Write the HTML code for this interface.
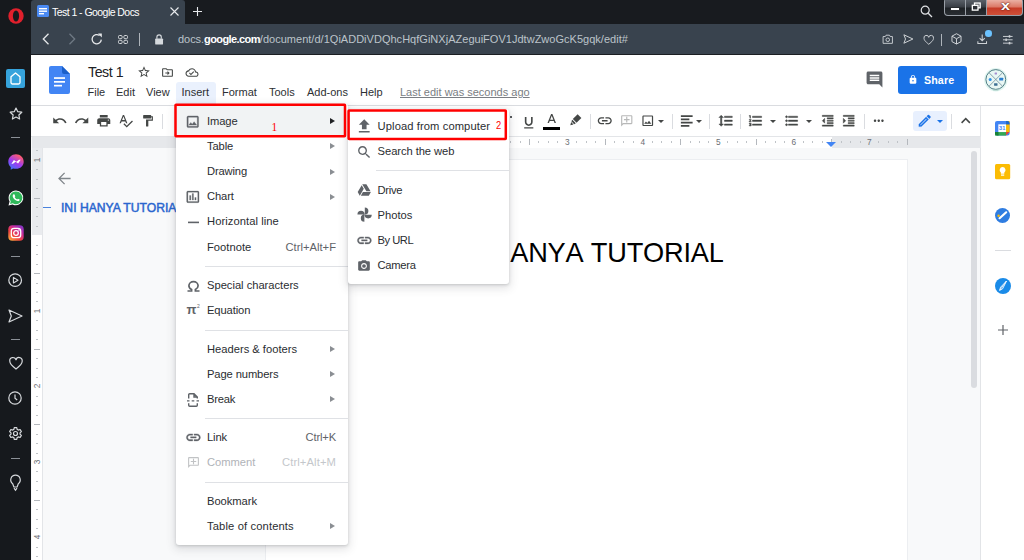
<!DOCTYPE html>
<html lang="en">
<head>
<meta charset="utf-8">
<title>Test 1 - Google Docs</title>
<style>
*{box-sizing:border-box;margin:0;padding:0}
html,body{width:1024px;height:560px;overflow:hidden}
body{position:relative;background:#f8f9fa;font-family:"Liberation Sans",sans-serif;color:#202124}
.abs{position:absolute}
svg{position:absolute;overflow:visible}
.t{position:absolute;white-space:nowrap;line-height:1}
/* opera chrome */
#osb{left:0;top:0;width:31px;height:560px;background:#16191d}
#tabbar{left:31px;top:0;width:993px;height:24px;background:#181b1f}
#tab{left:31px;top:0;width:154px;height:25px;background:#39434e;border-radius:3px 3px 0 0}
#addr{left:31px;top:24px;width:993px;height:30px;background:#39434e}
#addrline{left:31px;top:54px;width:993px;height:1px;background:#1b1e22}
/* docs */
#hdr{left:31px;top:55px;width:993px;height:50px;background:#fff}
#hdrline{left:31px;top:105px;width:993px;height:1px;background:#dadce0}
#tb{left:31px;top:106px;width:950px;height:30px;background:#fff}
#tbline{left:31px;top:136px;width:950px;height:1px;background:#e3e5e8}
#rpanel{left:981px;top:106px;width:43px;height:454px;background:#fff}
#rpline{left:980px;top:106px;width:1px;height:454px;background:#e2e4e7}
#page{left:265.500px;top:159.700px;width:641.800px;height:410px;background:#fff;box-shadow:0 0 0 1px #eceef1}
.sep{position:absolute;width:1px;height:15px;top:114px;background:#dadce0}
.menu{position:absolute;background:#fff;border-radius:3px;box-shadow:0 1px 3px rgba(60,64,67,.22),0 3px 8px 2px rgba(60,64,67,.13)}
.mi{position:absolute;font-size:11.200px;letter-spacing:.1px;line-height:13px;white-space:nowrap;color:#2a2d31}
.sc{position:absolute;font-size:11.200px;letter-spacing:.1px;line-height:13px;white-space:nowrap;color:#5f6368;text-align:right}
.msep{position:absolute;height:1px;background:#dfe1e5}
.arr{position:absolute;width:0;height:0;border-left:5px solid #5f6368;border-top:3px solid transparent;border-bottom:3px solid transparent}
.mb{font-size:11px;line-height:12px;color:#2c2f33}
.ti{width:13.5px;height:13.5px;top:114.2px;fill:#444746;transform:scale(1.16)}
.ti.ns{transform:none}
.ti.tk{stroke:#444746;stroke-width:.7}
.car{position:absolute;top:119.500px;width:0;height:0;border-top:3.500px solid #444746;border-left:3px solid transparent;border-right:3px solid transparent}
.rn{width:10px;text-align:center;font-size:8.300px;line-height:9px;color:#6a6e73}
.rn.v{height:10px;line-height:10px;transform:rotate(-90deg)}
.osd{left:11px;width:9px;height:1px;background:#8b9097}
.red{position:absolute;border:2.500px solid #f00;border-radius:1px}
</style>
</head>
<body>
<!-- ===== Opera chrome ===== -->
<div class="abs" id="tabbar"></div>
<div class="abs" id="tab"></div>
<div class="abs" id="addr"></div>
<div class="abs" id="addrline"></div>
<div class="abs" id="osb"></div>

<!-- ===== Docs surfaces ===== -->
<div class="abs" id="hdr"></div>
<div class="abs" id="hdrline"></div>
<div class="abs" id="tb"></div>
<div class="abs" id="tbline"></div>
<div class="abs" id="page"></div>
<div class="abs" id="rpanel"></div>
<div class="abs" id="rpline"></div>

<!--CHROME-->
<!-- tab -->
<svg style="left:37px;top:5px" width="12" height="12" viewBox="0 0 12 12"><rect x="0" y="0" width="12" height="12" rx="1.5" fill="#4a8af4"/><rect x="2" y="3" width="8" height="1.4" fill="#fff"/><rect x="2" y="5.5" width="8" height="1.4" fill="#fff"/><rect x="2" y="8" width="5" height="1.4" fill="#fff"/></svg>
<div class="t" id="tabtxt" style="left:52px;top:7px;font-size:10.5px;color:#fff;letter-spacing:-0.55px">Test 1 - Google Docs</div>
<svg style="left:170px;top:7px" width="9" height="9" viewBox="0 0 9 9"><path d="M0.5 0.5L8.5 8.5M8.5 0.5L0.5 8.5" stroke="#e8eaed" stroke-width="1.1" fill="none"/></svg>
<svg style="left:193px;top:7px" width="9" height="9" viewBox="0 0 9 9"><path d="M4.5 0V9M0 4.5H9" stroke="#e8eaed" stroke-width="1.1" fill="none"/></svg>
<!-- search + window buttons -->
<svg style="left:920px;top:5px" width="13" height="13" viewBox="0 0 13 13"><circle cx="5.200" cy="5.200" r="4" stroke="#e0e2e5" stroke-width="1.200" fill="none"/><path d="M8.200 8.200L12 12" stroke="#e0e2e5" stroke-width="1.300"/></svg>
<div class="abs" style="left:943.500px;top:-2px;width:79.500px;height:17.800px;border-radius:4px;background:#9aa0a8"></div>
<div class="abs" style="left:944.500px;top:0;width:20.500px;height:14.600px;border-radius:0 0 0 3px;background:linear-gradient(#5a6068,#3a3f46 45%,#1e2226 55%,#2a2e33)"></div>
<div class="abs" style="left:966.300px;top:0;width:19.700px;height:14.600px;background:linear-gradient(#5a6068,#3a3f46 45%,#1e2226 55%,#2a2e33)"></div>
<div class="abs" style="left:987.300px;top:0;width:34.700px;height:14.600px;border-radius:0 0 3px 0;background:linear-gradient(#eab0a4,#dc7a68 45%,#c63c28 55%,#cf5038)"></div>
<div class="abs" style="left:949.600px;top:7px;width:10px;height:4px;background:#fff;border:1px solid #2a2d31;box-sizing:border-box"></div>
<svg style="left:970.500px;top:2px" width="10.500" height="9.600" viewBox="0 0 12 11"><rect x="4" y="1.200" width="6.500" height="5.500" fill="#555a61" stroke="#fff" stroke-width="1.500"/><rect x="1.500" y="3.800" width="6.500" height="5.500" fill="#2c3036" stroke="#fff" stroke-width="1.500"/></svg>
<div class="t" style="left:1001px;top:-0.500px;font-size:12px;line-height:13px;font-weight:bold;color:#fff;text-shadow:0 0 1.500px #5a1a10,0 0 1px #5a1a10;transform:scaleX(1.350);transform-origin:0 0">x</div>
<!-- address bar icons -->
<svg style="left:42px;top:33px" width="8" height="12" viewBox="0 0 8 12"><path d="M6.5 0.8L1.3 6L6.5 11.2" stroke="#e6e8ea" stroke-width="1.3" fill="none"/></svg>
<svg style="left:68px;top:33px" width="8" height="12" viewBox="0 0 8 12"><path d="M1.5 0.8L6.7 6L1.5 11.2" stroke="#6f7984" stroke-width="1.3" fill="none"/></svg>
<svg style="left:91px;top:33px" width="12" height="12" viewBox="0 0 12 12"><path d="M10.3 6.6A4.6 4.6 0 1 1 8.6 2.6" stroke="#e6e8ea" stroke-width="1.3" fill="none"/><path d="M7 0.6H10.8V4.4Z" fill="#e6e8ea"/></svg>
<svg style="left:117.500px;top:34.800px" width="10" height="9" viewBox="0 0 10 9"><g fill="none" stroke="#d6d9dc" stroke-width="1"><rect x="0.500" y="0.500" width="3.600" height="3.200" rx="1"/><rect x="5.900" y="0.500" width="3.600" height="3.200" rx="1"/><rect x="0.500" y="5.300" width="3.600" height="3.200" rx="1"/><rect x="5.900" y="5.300" width="3.600" height="3.200" rx="1"/></g></svg>
<div class="abs" style="left:139px;top:33px;width:1px;height:13px;background:#aeb4ba"></div>
<svg style="left:154.500px;top:33.700px" width="8.200" height="10.500" viewBox="0 0 9 12"><rect x="0" y="5" width="9" height="7" rx="1" fill="#d5d9dd"/><path d="M2 5.500V3.500A2.500 2.500 0 0 1 7 3.500V5.500" stroke="#d5d9dd" stroke-width="1.300" fill="none"/></svg>
<div class="t" id="url" style="left:178px;top:34px;font-size:11px;color:#bcc3ca;letter-spacing:-0.04px">docs.<span style="color:#fff;font-weight:bold;letter-spacing:-0.6px">google.com</span><span id="urlrest" style="letter-spacing:.02px">/document/d/1QiADDiVDQhcHqfGiNXjAZeguiFOV1JdtwZwoGcK5gqk/edit#</span></div>
<!-- right addr icons -->
<svg style="left:881.500px;top:33.800px" width="11.500" height="10.200" viewBox="0 0 13 12"><path d="M1 3H3.600L4.500 1.400H8.500L9.400 3H12V11H1Z" stroke="#cdd1d5" stroke-width="1.100" fill="none" stroke-linejoin="round"/><circle cx="6.500" cy="6.800" r="2.100" stroke="#cdd1d5" stroke-width="1.100" fill="none"/></svg>
<svg style="left:903px;top:34px" width="10.800" height="10" viewBox="0 0 12 11"><path d="M1 0.800L11 5.500L1 10.200L2.800 5.500Z" stroke="#cdd1d5" stroke-width="1.100" fill="none" stroke-linejoin="round"/></svg>
<svg style="left:922.500px;top:34.500px" width="11.500" height="10" viewBox="0 0 12 11"><path d="M6 10.200C2 7 0.800 5.400 0.800 3.500A2.600 2.600 0 0 1 6 2.600A2.600 2.600 0 0 1 11.200 3.500C11.200 5.400 10 7 6 10.200Z" stroke="#cdd1d5" stroke-width="1.100" fill="none"/></svg>
<div class="abs" style="left:940.500px;top:33.500px;width:1px;height:12px;background:#aeb4ba"></div>
<svg style="left:951.200px;top:33.300px" width="11" height="11.800" viewBox="0 0 12 13"><path d="M6 0.800L11 3.500V9.500L6 12.200L1 9.500V3.500Z M1 3.500L6 6.300L11 3.500 M6 6.300V12.200" stroke="#cdd1d5" stroke-width="1.100" fill="none" stroke-linejoin="round"/></svg>
<svg style="left:976.800px;top:34px" width="10.400" height="10.400" viewBox="0 0 12 12"><path d="M6 0.500V7.500M3 4.800L6 7.800L9 4.800M1 8.500V11H11V8.500" stroke="#cdd1d5" stroke-width="1.200" fill="none"/></svg>
<div class="abs" style="left:985.200px;top:30px;width:6.600px;height:6.600px;border-radius:50%;background:#6cc3ff"></div>
<svg style="left:1002.700px;top:34.500px" width="9.600" height="9.600" viewBox="0 0 10 10"><path d="M0 1.500H10M0 5H10M0 8.500H10" stroke="#cdd1d5" stroke-width="1"/><rect x="6" y="0.200" width="1.600" height="2.600" fill="#cdd1d5"/><rect x="2.500" y="3.700" width="1.600" height="2.600" fill="#cdd1d5"/><rect x="6" y="7.200" width="1.600" height="2.600" fill="#cdd1d5"/></svg>
<!--/CHROME-->
<!--HEADER-->
<!-- docs logo -->
<svg style="left:49px;top:66px" width="21" height="28" viewBox="0 0 21 28"><path d="M2 0H13L21 8V26A2 2 0 0 1 19 28H2A2 2 0 0 1 0 26V2A2 2 0 0 1 2 0Z" fill="#4285f4"/><path d="M13 0L21 8H15A2 2 0 0 1 13 6Z" fill="#1a5fc9"/><rect x="5" y="11.2" width="11" height="1.7" fill="#fff"/><rect x="5" y="15" width="11" height="1.7" fill="#fff"/><rect x="5" y="18.8" width="8" height="1.7" fill="#fff"/></svg>
<div class="t" id="title" style="left:88px;top:63.500px;font-size:14.200px;line-height:17px;color:#202124;letter-spacing:-0.45px">Test 1</div>
<svg style="left:137px;top:65px" width="14" height="14" viewBox="0 0 24 24"><path fill="#444746" d="M22 9.24l-7.19-.62L12 2 9.19 8.63 2 9.24l5.46 4.73L5.82 21 12 17.27 18.18 21l-1.63-7.03L22 9.24zM12 15.4l-3.76 2.27 1-4.28-3.32-2.88 4.38-.38L12 6.1l1.71 4.04 4.38.38-3.32 2.88 1 4.28L12 15.4z"/></svg>
<svg style="left:161px;top:66px" width="13" height="13" viewBox="0 0 24 24"><path fill="#444746" d="M20 6h-8l-2-2H4c-1.1 0-2 .9-2 2v12c0 1.1.9 2 2 2h16c1.1 0 2-.9 2-2V8c0-1.1-.9-2-2-2zm0 12H4V6h5.17l2 2H20v10zm-8-1l4-4-4-4v3H8v2h4v3z"/></svg>
<svg style="left:185px;top:66px" width="14" height="13" viewBox="0 0 24 24"><path fill="#444746" d="M19.35 10.04C18.67 6.59 15.64 4 12 4 9.11 4 6.6 5.64 5.35 8.04 2.34 8.36 0 10.91 0 14c0 3.31 2.69 6 6 6h13c2.76 0 5-2.24 5-5 0-2.64-2.05-4.78-4.65-4.96zM19 18H6c-2.21 0-4-1.79-4-4s1.79-4 4-4h.71C7.37 7.69 9.48 6 12 6c3.04 0 5.5 2.46 5.5 5.5v.5H19c1.66 0 3 1.34 3 3s-1.34 3-3 3zm-9-3.820l-2.090-2.090L6.5 13.5 10 17l6.010-6.010-1.410-1.410z"/></svg>
<!-- menubar -->
<div class="abs" style="left:176px;top:82px;width:40px;height:23px;background:#eaf1fd;border-radius:3px 3px 0 0"></div>
<div class="t mb" id="m1" style="left:87.5px;top:86.400px">File</div>
<div class="t mb" id="m2" style="left:116px;top:86.400px">Edit</div>
<div class="t mb" id="m3" style="left:146px;top:86.400px">View</div>
<div class="t mb" id="m4" style="left:181.5px;top:86.400px">Insert</div>
<div class="t mb" id="m5" style="left:222px;top:86.400px">Format</div>
<div class="t mb" id="m6" style="left:269px;top:86.400px">Tools</div>
<div class="t mb" id="m7" style="left:307px;top:86.400px">Add-ons</div>
<div class="t mb" id="m8" style="left:360px;top:86.400px">Help</div>
<div class="t" id="lastedit" style="left:400px;top:86px;font-size:11px;color:#7a7e83;text-decoration:underline;line-height:12px">Last edit was seconds ago</div>
<!-- right of header -->
<svg style="left:864.500px;top:70px" width="19" height="19" viewBox="0 0 24 24"><path fill="#5f6368" d="M21.99 4c0-1.1-.89-2-1.99-2H4c-1.1 0-2 .9-2 2v12c0 1.1.9 2 2 2h14l4 4-.01-18zM18 14H6v-2h12v2zm0-3H6V9h12v2zm0-3H6V6h12v2z"/></svg>
<div class="abs" style="left:898.300px;top:66px;width:69.200px;height:28px;background:#1a73e8;border-radius:3px"></div>
<svg style="left:908px;top:74px" width="10" height="11" viewBox="0 0 24 24"><path fill="#fff" d="M18 8h-1V6c0-2.760-2.240-5-5-5S7 3.240 7 6v2H6c-1.100 0-2 .9-2 2v10c0 1.100.9 2 2 2h12c1.100 0 2-.9 2-2V10c0-1.100-.9-2-2-2zm-6 9c-1.100 0-2-.9-2-2s.9-2 2-2 2 .9 2 2-.9 2-2 2zm3.100-9H8.900V6c0-1.710 1.390-3.100 3.100-3.100 1.710 0 3.100 1.390 3.100 3.100v2z"/></svg>
<div class="t" id="share" style="left:924px;top:74px;font-size:10.700px;line-height:12px;font-weight:bold;letter-spacing:.1px;color:#fff">Share</div>
<!-- avatar -->
<svg style="left:983.500px;top:68px" width="23.600" height="23.600" viewBox="-11.800 -11.800 23.600 23.600"><circle r="11.700" fill="#e1f5f0"/><circle r="9.900" cy="-0.300" fill="#e9f7f4" stroke="#3f6f78" stroke-width=".9"/><path d="M-6.800 -7.100L6.800 6.500M6.800 -7.100L-6.800 6.500" stroke="#6f8c98" stroke-width=".8"/><circle cx="-5.600" cy="-0.200" r="1.500" fill="#2f8fe6"/><rect x="3.400" y="-2" width="4" height="2.800" rx=".4" fill="#2a7fd0"/><rect x="-1.700" y="3.500" width="3.400" height="2.400" rx=".3" fill="#3d6f92"/><rect x="-1.200" y="-7.300" width="2.400" height="2" rx=".4" fill="#a58fd0"/><rect x="-2.600" y="9.800" width="5.200" height=".9" fill="#9cc5bd"/></svg>
<!--/HEADER-->
<!--TOOLBAR-->
<!-- toolbar icons: each 13.5px (18*0.75) -->
<svg class="ti" style="left:53px" viewBox="0 0 24 24"><path d="M12.5 8c-2.650 0-5.050.99-6.900 2.600L2 7v9h9l-3.620-3.620c1.390-1.160 3.160-1.880 5.120-1.880 3.540 0 6.550 2.310 7.600 5.500l2.370-.78C21.080 11.030 17.150 8 12.500 8z"/></svg>
<svg class="ti" style="left:75px" viewBox="0 0 24 24"><path d="M18.400 10.600C16.550 8.990 14.150 8 11.500 8c-4.650 0-8.580 3.030-9.960 7.220L3.900 16c1.050-3.190 4.050-5.500 7.600-5.500 1.950 0 3.730.72 5.120 1.880L13 16h9V7l-3.600 3.600z"/></svg>
<svg class="ti" style="left:97px" viewBox="0 0 24 24"><path d="M19 8H5c-1.660 0-3 1.340-3 3v6h4v4h12v-4h4v-6c0-1.660-1.340-3-3-3zm-3 11H8v-5h8v5zm3-7c-.55 0-1-.45-1-1s.45-1 1-1 1 .45 1 1-.45 1-1 1zm-1-9H6v4h12V3z"/></svg>
<svg class="ti" style="left:119px" viewBox="0 0 24 24"><path d="M12.450 16h2.090L9.430 3H7.570L2.460 16h2.090l1.120-3h5.640l1.140 3zm-6.020-5L8.500 5.480 10.570 11H6.430zm15.160.59l-8.090 8.090L9.830 16l-1.410 1.410 5.090 5.090L23 13l-1.410-1.410z"/></svg>
<svg class="ti" style="left:141px;transform:scale(1.020)" viewBox="0 0 24 24"><path d="M18 4V3c0-.55-.45-1-1-1H5c-.55 0-1 .45-1 1v4c0 .55.45 1 1 1h12c.55 0 1-.45 1-1V6h1v4H9v11c0 .55.45 1 1 1h2c.55 0 1-.45 1-1v-9h8V4h-3z"/></svg>
<div class="sep" style="left:162px"></div>
<!-- after submenu -->
<svg class="ti" style="left:521.500px;top:115.500px" viewBox="0 0 24 24"><path d="M12 17c3.310 0 6-2.690 6-6V3h-2.500v8c0 1.930-1.570 3.500-3.500 3.500S8.500 12.930 8.500 11V3H6v8c0 3.310 2.690 6 6 6zm-7 2v2h14v-2H5z" /></svg>
<svg class="ti" style="left:544.500px" viewBox="0 0 24 24"><path d="M11 3L5.500 17h2.250l1.120-3h6.250l1.120 3h2.250L13 3h-2zm-1.380 9L12 5.670 14.380 12H9.620z" transform="translate(0 -1.500)"/></svg>
<div class="abs" style="left:542.500px;top:127px;width:17px;height:2.500px;background:#000"></div>
<svg class="ti" style="left:568.500px;top:113px;transform:scale(.95)" viewBox="0 0 24 24"><path d="M15.500 1.500L22.500 8.500L13.500 17.500L6.500 10.500Z"/><path d="M5.600 11.800L12.200 18.400L9 20.200L3.800 15Z"/><path d="M3.300 16.300L7.700 20.700L1.800 22.200Z"/></svg>
<div class="sep" style="left:590px"></div>
<svg class="ti" style="left:598px;transform:scale(1.250)" viewBox="0 0 24 24"><path d="M3.900 12c0-1.710 1.390-3.100 3.100-3.100h4V7H7c-2.760 0-5 2.240-5 5s2.240 5 5 5h4v-1.900H7c-1.710 0-3.100-1.390-3.100-3.100zM8 13h8v-2H8v2zm9-6h-4v1.900h4c1.710 0 3.100 1.390 3.100 3.100s-1.390 3.100-3.100 3.100h-4V17h4c2.760 0 5-2.240 5-5s-2.240-5-5-5z"/></svg>
<svg class="ti ns" style="left:620px;opacity:.38" viewBox="0 0 24 24"><path transform="translate(24 0) scale(-1 1)" d="M22 4c0-1.100-.9-2-2-2H4c-1.100 0-2 .9-2 2v12c0 1.100.9 2 2 2h14l4 4V4zm-2 13.170L18.830 16H4V4h16v13.170zM13 5h-2v4H7v2h4v4h2v-4h4V9h-4z"/></svg>
<svg class="ti ns" style="left:640.500px;transform:scale(1.060)" viewBox="0 0 24 24"><path d="M19 5v14H5V5h14m0-2H5c-1.100 0-2 .9-2 2v14c0 1.100.9 2 2 2h14c1.100 0 2-.9 2-2V5c0-1.100-.9-2-2-2zm-4.860 8.860l-3 3.870L9 13.140 6 17h12l-3.860-5.140z"/></svg>
<div class="car" style="left:658px"></div>
<div class="sep" style="left:671.500px"></div>
<svg class="ti" style="left:680px" viewBox="0 0 24 24"><path d="M3 3.500h18v2.600H3zM3 8.500h13v2.600H3zM3 13.500h18v2.600H3zM3 18.500h13v2.600H3z"/></svg>
<div class="car" style="left:696px"></div>
<div class="sep" style="left:709px"></div>
<svg class="ti tk" style="left:718.500px" viewBox="0 0 24 24"><path d="M6 7h2.500L5 3.500 1.500 7H4v10H1.500L5 20.500 8.500 17H6V7zm4-2v2h12V5H10zm0 14h12v-2H10v2zm0-6h12v-2H10v2z"/></svg>
<div class="sep" style="left:739.500px"></div>
<svg class="ti tk" style="left:749px" viewBox="0 0 24 24"><path d="M2 17h2v.5H3v1h1v.5H2v1h3v-4H2v1zm1-9h1V4H2v1h1v3zm-1 3h1.800L2 13.100v.9h3v-1H3.200L5 10.900V10H2v1zm5-6v2h14V5H7zm0 14h14v-2H7v2zm0-6h14v-2H7v2z"/></svg>
<div class="car" style="left:769.500px"></div>
<svg class="ti tk" style="left:785px" viewBox="0 0 24 24"><path d="M4 10.500c-.83 0-1.500.67-1.500 1.500s.67 1.500 1.500 1.500 1.500-.67 1.500-1.500-.67-1.500-1.500-1.500zm0-6c-.83 0-1.500.67-1.500 1.500S3.170 7.500 4 7.500 5.500 6.830 5.500 6 4.830 4.500 4 4.500zm0 12c-.83 0-1.500.68-1.500 1.500s.68 1.500 1.500 1.500 1.500-.68 1.500-1.500-.67-1.500-1.500-1.500zM7 19h14v-2H7v2zm0-6h14v-2H7v2zm0-8v2h14V5H7z"/></svg>
<div class="car" style="left:805.500px"></div>
<svg class="ti tk" style="left:820.500px;transform:scale(1.080)" viewBox="0 0 24 24"><path d="M11 17h10v-2H11v2zm-8-5l4 4V8l-4 4zm0 9h18v-2H3v2zM3 3v2h18V3H3zm8 6h10V7H11v2zm0 4h10v-2H11v2z"/></svg>
<svg class="ti tk" style="left:842px;transform:scale(1.080)" viewBox="0 0 24 24"><path d="M3 21h18v-2H3v2zM3 8v8l4-4-4-4zm8 9h10v-2H11v2zM3 3v2h18V3H3zm8 6h10V7H11v2zm0 4h10v-2H11v2z"/></svg>
<div class="sep" style="left:863.500px"></div>
<svg class="ti" style="left:871.500px" viewBox="0 0 24 24"><path d="M6 10c-1.100 0-2 .9-2 2s.9 2 2 2 2-.9 2-2-.9-2-2-2zm12 0c-1.100 0-2 .9-2 2s.9 2 2 2 2-.9 2-2-.9-2-2-2zm-6 0c-1.100 0-2 .9-2 2s.9 2 2 2 2-.9 2-2-.9-2-2-2z" transform="translate(0.600 0.600) scale(.95)"/></svg>
<!-- editing mode button -->
<div class="abs" style="left:913px;top:110.700px;width:33.800px;height:20.500px;background:#e8f0fe;border-radius:3px"></div>
<svg class="ti" style="left:918px" viewBox="0 0 24 24"><path fill="#1a73e8" stroke="#1a73e8" stroke-width=".45" d="M14.060 9.020l.92.92L5.920 19H5v-.92l9.060-9.060M17.660 3c-.25 0-.51.1-.7.290l-1.830 1.830 3.750 3.750 1.830-1.830c.39-.39.39-1.020 0-1.410l-2.340-2.340c-.2-.2-.45-.29-.71-.29zm-3.600 3.190L3 17.250V21h3.750L17.810 9.940l-3.750-3.750z"/></svg>
<div class="car" style="left:936.500px;border-top-color:#1a73e8"></div>
<div class="sep" style="left:951px"></div>
<svg class="ti" style="left:959px" viewBox="0 0 24 24"><path d="M12 8l-6 6 1.410 1.410L12 10.830l4.590 4.580L18 14z" transform="translate(-2.400 -2.400) scale(1.200)"/></svg>
<!--/TOOLBAR-->
<!--RULERS-->
<div class="abs" style="left:42px;top:136.500px;width:939px;height:11px;background:#e6e8eb"></div>
<div class="abs" style="left:32px;top:136.500px;width:876px;height:11px;background:#e6e8eb"></div>
<div class="abs" style="left:340.6px;top:136.500px;width:491.1px;height:11px;background:#fff"></div>
<div class="abs" style="left:273.9px;top:140.800px;width:1px;height:2px;background:#bfc3c7"></div>
<div class="abs" style="left:283.4px;top:140.800px;width:1px;height:2px;background:#bfc3c7"></div>
<div class="abs" style="left:292.8px;top:140.800px;width:1px;height:2px;background:#bfc3c7"></div>
<div class="abs" style="left:302.3px;top:139px;width:1px;height:5.500px;background:#b4b8bd"></div>
<div class="abs" style="left:311.7px;top:140.800px;width:1px;height:2px;background:#bfc3c7"></div>
<div class="abs" style="left:321.2px;top:140.800px;width:1px;height:2px;background:#bfc3c7"></div>
<div class="abs" style="left:330.6px;top:140.800px;width:1px;height:2px;background:#bfc3c7"></div>
<div class="abs" style="left:349.5px;top:140.800px;width:1px;height:2px;background:#bfc3c7"></div>
<div class="abs" style="left:358.9px;top:140.800px;width:1px;height:2px;background:#bfc3c7"></div>
<div class="abs" style="left:368.4px;top:140.800px;width:1px;height:2px;background:#bfc3c7"></div>
<div class="abs" style="left:377.8px;top:139px;width:1px;height:5.500px;background:#b4b8bd"></div>
<div class="abs" style="left:387.3px;top:140.800px;width:1px;height:2px;background:#bfc3c7"></div>
<div class="abs" style="left:396.7px;top:140.800px;width:1px;height:2px;background:#bfc3c7"></div>
<div class="abs" style="left:406.2px;top:140.800px;width:1px;height:2px;background:#bfc3c7"></div>
<div class="t rn" style="left:411.1px;top:138px">1</div>
<div class="abs" style="left:425.0px;top:140.800px;width:1px;height:2px;background:#bfc3c7"></div>
<div class="abs" style="left:434.5px;top:140.800px;width:1px;height:2px;background:#bfc3c7"></div>
<div class="abs" style="left:443.9px;top:140.800px;width:1px;height:2px;background:#bfc3c7"></div>
<div class="abs" style="left:453.4px;top:139px;width:1px;height:5.500px;background:#b4b8bd"></div>
<div class="abs" style="left:462.8px;top:140.800px;width:1px;height:2px;background:#bfc3c7"></div>
<div class="abs" style="left:472.3px;top:140.800px;width:1px;height:2px;background:#bfc3c7"></div>
<div class="abs" style="left:481.7px;top:140.800px;width:1px;height:2px;background:#bfc3c7"></div>
<div class="t rn" style="left:486.6px;top:138px">2</div>
<div class="abs" style="left:500.6px;top:140.800px;width:1px;height:2px;background:#bfc3c7"></div>
<div class="abs" style="left:510.0px;top:140.800px;width:1px;height:2px;background:#bfc3c7"></div>
<div class="abs" style="left:519.5px;top:140.800px;width:1px;height:2px;background:#bfc3c7"></div>
<div class="abs" style="left:528.9px;top:139px;width:1px;height:5.500px;background:#b4b8bd"></div>
<div class="abs" style="left:538.4px;top:140.800px;width:1px;height:2px;background:#bfc3c7"></div>
<div class="abs" style="left:547.8px;top:140.800px;width:1px;height:2px;background:#bfc3c7"></div>
<div class="abs" style="left:557.3px;top:140.800px;width:1px;height:2px;background:#bfc3c7"></div>
<div class="t rn" style="left:562.2px;top:138px">3</div>
<div class="abs" style="left:576.1px;top:140.800px;width:1px;height:2px;background:#bfc3c7"></div>
<div class="abs" style="left:585.6px;top:140.800px;width:1px;height:2px;background:#bfc3c7"></div>
<div class="abs" style="left:595.0px;top:140.800px;width:1px;height:2px;background:#bfc3c7"></div>
<div class="abs" style="left:604.5px;top:139px;width:1px;height:5.500px;background:#b4b8bd"></div>
<div class="abs" style="left:613.9px;top:140.800px;width:1px;height:2px;background:#bfc3c7"></div>
<div class="abs" style="left:623.4px;top:140.800px;width:1px;height:2px;background:#bfc3c7"></div>
<div class="abs" style="left:632.8px;top:140.800px;width:1px;height:2px;background:#bfc3c7"></div>
<div class="t rn" style="left:637.8px;top:138px">4</div>
<div class="abs" style="left:651.7px;top:140.800px;width:1px;height:2px;background:#bfc3c7"></div>
<div class="abs" style="left:661.1px;top:140.800px;width:1px;height:2px;background:#bfc3c7"></div>
<div class="abs" style="left:670.6px;top:140.800px;width:1px;height:2px;background:#bfc3c7"></div>
<div class="abs" style="left:680.0px;top:139px;width:1px;height:5.500px;background:#b4b8bd"></div>
<div class="abs" style="left:689.5px;top:140.800px;width:1px;height:2px;background:#bfc3c7"></div>
<div class="abs" style="left:698.9px;top:140.800px;width:1px;height:2px;background:#bfc3c7"></div>
<div class="abs" style="left:708.4px;top:140.800px;width:1px;height:2px;background:#bfc3c7"></div>
<div class="t rn" style="left:713.3px;top:138px">5</div>
<div class="abs" style="left:727.2px;top:140.800px;width:1px;height:2px;background:#bfc3c7"></div>
<div class="abs" style="left:736.7px;top:140.800px;width:1px;height:2px;background:#bfc3c7"></div>
<div class="abs" style="left:746.1px;top:140.800px;width:1px;height:2px;background:#bfc3c7"></div>
<div class="abs" style="left:755.6px;top:139px;width:1px;height:5.500px;background:#b4b8bd"></div>
<div class="abs" style="left:765.0px;top:140.800px;width:1px;height:2px;background:#bfc3c7"></div>
<div class="abs" style="left:774.5px;top:140.800px;width:1px;height:2px;background:#bfc3c7"></div>
<div class="abs" style="left:783.9px;top:140.800px;width:1px;height:2px;background:#bfc3c7"></div>
<div class="t rn" style="left:788.8px;top:138px">6</div>
<div class="abs" style="left:802.8px;top:140.800px;width:1px;height:2px;background:#bfc3c7"></div>
<div class="abs" style="left:812.2px;top:140.800px;width:1px;height:2px;background:#bfc3c7"></div>
<div class="abs" style="left:821.7px;top:140.800px;width:1px;height:2px;background:#bfc3c7"></div>
<div class="abs" style="left:831.1px;top:139px;width:1px;height:5.500px;background:#b4b8bd"></div>
<div class="abs" style="left:840.6px;top:140.800px;width:1px;height:2px;background:#bfc3c7"></div>
<div class="abs" style="left:850.0px;top:140.800px;width:1px;height:2px;background:#bfc3c7"></div>
<div class="abs" style="left:859.5px;top:140.800px;width:1px;height:2px;background:#bfc3c7"></div>
<div class="t rn" style="left:864.4px;top:138px">7</div>
<div class="abs" style="left:878.3px;top:140.800px;width:1px;height:2px;background:#bfc3c7"></div>
<div class="abs" style="left:887.8px;top:140.800px;width:1px;height:2px;background:#bfc3c7"></div>
<div class="abs" style="left:897.2px;top:140.800px;width:1px;height:2px;background:#bfc3c7"></div>
<svg style="left:826px;top:142px" width="10" height="5" viewBox="0 0 10 5"><path d="M0 0H10L5 5Z" fill="#4285f4"/></svg>
<div class="abs" style="left:32px;top:148px;width:10px;height:412px;background:#fff"></div>
<div class="abs" style="left:32px;top:148px;width:10px;height:87.1px;background:#e9ebee"></div>
<div class="abs" style="left:42px;top:148px;width:1px;height:412px;background:#e3e5e8"></div>
<div class="abs" style="left:36px;top:150.3px;width:2px;height:1px;background:#bfc3c7"></div>
<div class="t rn v" style="left:32px;top:154.5px">1</div>
<div class="abs" style="left:36px;top:169.1px;width:2px;height:1px;background:#bfc3c7"></div>
<div class="abs" style="left:36px;top:178.6px;width:2px;height:1px;background:#bfc3c7"></div>
<div class="abs" style="left:36px;top:188.0px;width:2px;height:1px;background:#bfc3c7"></div>
<div class="abs" style="left:34px;top:197.5px;width:6px;height:1px;background:#b4b8bd"></div>
<div class="abs" style="left:36px;top:206.9px;width:2px;height:1px;background:#bfc3c7"></div>
<div class="abs" style="left:36px;top:216.4px;width:2px;height:1px;background:#bfc3c7"></div>
<div class="abs" style="left:36px;top:225.8px;width:2px;height:1px;background:#bfc3c7"></div>
<div class="abs" style="left:36px;top:244.7px;width:2px;height:1px;background:#bfc3c7"></div>
<div class="abs" style="left:36px;top:254.1px;width:2px;height:1px;background:#bfc3c7"></div>
<div class="abs" style="left:36px;top:263.6px;width:2px;height:1px;background:#bfc3c7"></div>
<div class="abs" style="left:34px;top:273.0px;width:6px;height:1px;background:#b4b8bd"></div>
<div class="abs" style="left:36px;top:282.5px;width:2px;height:1px;background:#bfc3c7"></div>
<div class="abs" style="left:36px;top:291.9px;width:2px;height:1px;background:#bfc3c7"></div>
<div class="abs" style="left:36px;top:301.4px;width:2px;height:1px;background:#bfc3c7"></div>
<div class="t rn v" style="left:32px;top:305.6px">1</div>
<div class="abs" style="left:36px;top:320.2px;width:2px;height:1px;background:#bfc3c7"></div>
<div class="abs" style="left:36px;top:329.7px;width:2px;height:1px;background:#bfc3c7"></div>
<div class="abs" style="left:36px;top:339.1px;width:2px;height:1px;background:#bfc3c7"></div>
<div class="abs" style="left:34px;top:348.6px;width:6px;height:1px;background:#b4b8bd"></div>
<div class="abs" style="left:36px;top:358.0px;width:2px;height:1px;background:#bfc3c7"></div>
<div class="abs" style="left:36px;top:367.5px;width:2px;height:1px;background:#bfc3c7"></div>
<div class="abs" style="left:36px;top:376.9px;width:2px;height:1px;background:#bfc3c7"></div>
<div class="t rn v" style="left:32px;top:381.1px">2</div>
<div class="abs" style="left:36px;top:395.8px;width:2px;height:1px;background:#bfc3c7"></div>
<div class="abs" style="left:36px;top:405.2px;width:2px;height:1px;background:#bfc3c7"></div>
<div class="abs" style="left:36px;top:414.7px;width:2px;height:1px;background:#bfc3c7"></div>
<div class="abs" style="left:34px;top:424.1px;width:6px;height:1px;background:#b4b8bd"></div>
<div class="abs" style="left:36px;top:433.6px;width:2px;height:1px;background:#bfc3c7"></div>
<div class="abs" style="left:36px;top:443.0px;width:2px;height:1px;background:#bfc3c7"></div>
<div class="abs" style="left:36px;top:452.5px;width:2px;height:1px;background:#bfc3c7"></div>
<div class="t rn v" style="left:32px;top:456.7px">3</div>
<div class="abs" style="left:36px;top:471.3px;width:2px;height:1px;background:#bfc3c7"></div>
<div class="abs" style="left:36px;top:480.8px;width:2px;height:1px;background:#bfc3c7"></div>
<div class="abs" style="left:36px;top:490.2px;width:2px;height:1px;background:#bfc3c7"></div>
<div class="abs" style="left:34px;top:499.7px;width:6px;height:1px;background:#b4b8bd"></div>
<div class="abs" style="left:36px;top:509.1px;width:2px;height:1px;background:#bfc3c7"></div>
<div class="abs" style="left:36px;top:518.6px;width:2px;height:1px;background:#bfc3c7"></div>
<div class="abs" style="left:36px;top:528.0px;width:2px;height:1px;background:#bfc3c7"></div>
<div class="t rn v" style="left:32px;top:532.2px">4</div>
<div class="abs" style="left:36px;top:546.9px;width:2px;height:1px;background:#bfc3c7"></div>
<div class="abs" style="left:36px;top:556.3px;width:2px;height:1px;background:#bfc3c7"></div>
<div class="abs" style="left:906.500px;top:139px;width:1px;height:5.500px;background:#b4b8bd"></div>
<!--/RULERS-->
<!--DOC-->
<!-- outline panel -->
<svg style="left:58px;top:172px" width="13" height="13" viewBox="0 0 13 13"><path d="M12.600 6.500H1.200M6.600 0.900L1 6.500L6.600 12.100" fill="none" stroke="#80868b" stroke-width="1.300"/></svg>
<div class="abs" style="left:42.700px;top:206.700px;width:8.300px;height:1.700px;background:#4a82dc"></div>
<div class="t" id="outl" style="left:61.200px;top:200.500px;font-size:12.800px;line-height:14px;color:#2a66cf;-webkit-text-stroke:.5px #2a66cf;transform:scaleX(.949);transform-origin:0 0">INI HANYA TUTORIAL</div>
<!-- document title -->
<div class="t" id="doctitle" style="font-kerning:none;clip-path:inset(0 0 0 60.500px);letter-spacing:-0.2px;left:449.300px;top:236.500px;font-size:27.200px;line-height:31px;color:#000">INI HANYA TUTORIAL</div>
<!-- scrollbar -->
<div class="abs" style="left:971px;top:151px;width:6px;height:237px;border-radius:3px;background:#dadce0"></div>
<!--/DOC-->
<!--MENUS-->
<div class="menu" style="left:176px;top:104px;width:172px;height:441.0px"></div>
<div class="abs" style="left:176px;top:106px;width:170px;height:28.500px;background:#f1f3f4"></div>
<div class="mi" style="left:207px;top:115px;letter-spacing:-0.12px">Image</div>
<div class="arr" style="left:330px;top:118.2px;border-left-color:#202124"></div>
<div class="mi" style="left:207px;top:140px;letter-spacing:-0.10px">Table</div>
<div class="arr" style="left:330px;top:143.3px;border-left-color:#8a8e93"></div>
<div class="mi" style="left:207px;top:165px;letter-spacing:-0.15px">Drawing</div>
<div class="arr" style="left:330px;top:168.5px;border-left-color:#8a8e93"></div>
<div class="mi" style="left:207px;top:190px;letter-spacing:-0.12px">Chart</div>
<div class="arr" style="left:330px;top:193.6px;border-left-color:#8a8e93"></div>
<div class="mi" style="left:207px;top:215px;letter-spacing:0.06px">Horizontal line</div>
<div class="mi" style="left:207px;top:241px;letter-spacing:0.01px">Footnote</div>
<div class="sc" style="left:236px;width:100px;top:241px;letter-spacing:0.01px">Ctrl+Alt+F</div>
<div class="msep" style="left:205px;top:266.1px;width:143px"></div>
<div class="mi" style="left:207px;top:279px;letter-spacing:-0.02px">Special characters</div>
<div class="mi" style="left:207px;top:304px;letter-spacing:-0.11px">Equation</div>
<div class="msep" style="left:205px;top:329.7px;width:143px"></div>
<div class="mi" style="left:207px;top:343px;letter-spacing:-0.01px">Headers &amp; footers</div>
<div class="arr" style="left:330px;top:345.9px;border-left-color:#8a8e93"></div>
<div class="mi" style="left:207px;top:368px;letter-spacing:-0.11px">Page numbers</div>
<div class="arr" style="left:330px;top:371.1px;border-left-color:#8a8e93"></div>
<div class="mi" style="left:207px;top:393px;letter-spacing:-0.25px">Break</div>
<div class="arr" style="left:330px;top:396.2px;border-left-color:#8a8e93"></div>
<div class="msep" style="left:205px;top:418.4px;width:143px"></div>
<div class="mi" style="left:207px;top:431px;letter-spacing:-0.13px">Link</div>
<div class="sc" style="left:236px;width:100px;top:431px;letter-spacing:-0.15px">Ctrl+K</div>
<div class="mi" style="left:207px;top:456px;color:#b0b3b8;letter-spacing:-0.03px">Comment</div>
<div class="sc" style="left:236px;width:100px;top:456px;color:#c4c7cb;letter-spacing:0.12px">Ctrl+Alt+M</div>
<div class="msep" style="left:205px;top:482.0px;width:143px"></div>
<div class="mi" style="left:207px;top:495px;letter-spacing:-0.05px">Bookmark</div>
<div class="mi" style="left:207px;top:520px;letter-spacing:0.13px">Table of contents</div>
<div class="arr" style="left:330px;top:523.4px;border-left-color:#8a8e93"></div>
<svg style="left:185.2px;top:113.7px;stroke:#5f6368;stroke-width:.5" width="15.5" height="15.5" viewBox="0 0 24 24" fill="#5f6368"><path d="M19 5v14H5V5h14m0-2H5c-1.100 0-2 .9-2 2v14c0 1.100.9 2 2 2h14c1.100 0 2-.9 2-2V5c0-1.100-.9-2-2-2zm-4.860 8.860l-3 3.870L9 13.140 6 17h12l-3.860-5.140z"/></svg>
<svg style="left:185.3px;top:189.4px;stroke:#5f6368;stroke-width:.35" width="15.7" height="15.7" viewBox="0 0 24 24" fill="#5f6368"><path d="M9 17H7v-7h2v7zm4 0h-2V7h2v10zm4 0h-2v-4h2v4zm2.500 2.100h-15V5h15v14.100zm0-16.100h-15c-1.100 0-2 .9-2 2v14c0 1.100.9 2 2 2h15c1.100 0 2-.9 2-2V5c0-1.100-.9-2-2-2z"/></svg>
<svg style="left:187.800px;top:221.0px" width="11" height="3" viewBox="0 0 11 3"><rect x="0" y="0.600" width="11" height="1.600" fill="#5f6368"/></svg>
<svg style="left:186.500px;top:280.8px" width="13" height="11" viewBox="0 0 13 11" fill="none" stroke="#5f6368" stroke-width="1.700"><path d="M0.500 10H4.600V8.600C2.900 7.700 1.900 6.400 1.900 4.800A4.600 4.200 0 0 1 11.100 4.800C11.100 6.400 10.100 7.700 8.400 8.600V10H12.500"/></svg>
<div class="t" style="left:186.500px;top:302.2px;font-size:13px;line-height:16px;color:#5f6368;font-weight:bold">&#960;<span style="font-size:5px;font-weight:normal;position:relative;top:-6.500px;left:0.500px">2</span></div>
<svg style="left:187px;top:393.0px" width="12" height="14" viewBox="0 0 12 14" fill="none" stroke="#5f6368" stroke-width="1.400"><path d="M1.700 5.500V1.700A1 1 0 0 1 2.700 0.700H7L10.300 4V5.500M7 0.700V4H10.300"/><path d="M0 7.800H2.500M4.700 7.800H7.300M9.500 7.800H12" stroke-width="1.300"/><path d="M1.700 10.200V12.300A1 1 0 0 0 2.700 13.300H9.300A1 1 0 0 0 10.300 12.300V10.200"/></svg>
<svg style="left:184.9px;top:429.4px;stroke:#5f6368;stroke-width:.5" width="16.8" height="16.8" viewBox="0 0 24 24" fill="#5f6368"><path d="M3.900 12c0-1.710 1.390-3.100 3.100-3.100h4V7H7c-2.760 0-5 2.240-5 5s2.240 5 5 5h4v-1.900H7c-1.710 0-3.100-1.390-3.100-3.100zM8 13h8v-2H8v2zm9-6h-4v1.900h4c1.710 0 3.100 1.390 3.100 3.100s-1.390 3.100-3.100 3.100h-4V17h4c2.760 0 5-2.240 5-5s-2.240-5-5-5z"/></svg>
<svg style="left:186.7px;top:456.2px;opacity:.38" width="13" height="13" viewBox="0 0 24 24" fill="#5f6368"><path transform="translate(24 0) scale(-1 1)" d="M22 4c0-1.100-.9-2-2-2H4c-1.100 0-2 .9-2 2v12c0 1.100.9 2 2 2h14l4 4V4zm-2 13.170L18.830 16H4V4h16v13.170zM13 5h-2v4H7v2h4v4h2v-4h4V9h-4z"/></svg>
<div class="t" style="left:271.500px;top:120.500px;font-family:'Liberation Serif',serif;font-size:11.500px;line-height:13px;color:#f00">1</div>
<div class="menu" style="left:348px;top:109.3px;width:161px;height:174.4px"></div>
<div class="mi" style="left:377.6px;top:120px;letter-spacing:0.09px">Upload from computer</div>
<div class="mi" style="left:377.6px;top:145px;letter-spacing:-0.07px">Search the web</div>
<div class="msep" style="left:376px;top:170.3px;width:133px"></div>
<div class="mi" style="left:377.6px;top:184px;letter-spacing:-0.30px">Drive</div>
<div class="mi" style="left:377.6px;top:209px;letter-spacing:-0.04px">Photos</div>
<div class="mi" style="left:377.6px;top:234px;letter-spacing:-0.50px">By URL</div>
<div class="mi" style="left:377.6px;top:259px;letter-spacing:-0.30px">Camera</div>
<svg style="left:354.8px;top:116.6px" width="18.5" height="18.5" viewBox="0 0 24 24" fill="#5f6368"><path d="M9 16h6v-6h4l-7-7-7 7h4zm-4 2h14v2H5z"/></svg>
<svg style="left:356.1px;top:143.7px" width="16.5" height="16.5" viewBox="0 0 24 24" fill="#5f6368"><path d="M15.500 14h-.79l-.28-.27C15.410 12.590 16 11.110 16 9.500 16 5.910 13.090 3 9.500 3S3 5.910 3 9.500 5.910 16 9.500 16c1.610 0 3.090-.59 4.230-1.570l.27.28v.79l5 4.990L20.490 19l-4.990-5zm-6 0C7.010 14 5 11.990 5 9.500S7.010 5 9.500 5 14 7.010 14 9.500 11.990 14 9.500 14z"/></svg>
<svg style="left:356.9px;top:182.6px" width="14.6" height="14.6" viewBox="0 0 24 24" fill="#5f6368"><path d="M7.710 3.500L1.150 15l3.430 6 6.550-11.500L7.710 3.500zM9.730 15L6.300 21h13.120l3.430-6H9.730zm12.550-1.500L15.420 2H8.580l6.860 11.500h6.840z"/></svg>
<svg style="left:355.7px;top:206.4px" width="17.2" height="17.2" viewBox="0 0 24 24" fill="#5f6368"><path d="M12.300 12V2A5 5 0 0 1 12.300 12Z M12 12.300H22A5 5 0 0 1 12 12.300Z M11.700 12V22A5 5 0 0 1 11.700 12Z M12 11.700H2A5 5 0 0 1 12 11.700Z"/></svg>
<svg style="left:355.6px;top:231.8px;stroke:#5f6368;stroke-width:.5" width="16.8" height="16.8" viewBox="0 0 24 24" fill="#5f6368"><path d="M3.900 12c0-1.710 1.390-3.100 3.100-3.100h4V7H7c-2.760 0-5 2.240-5 5s2.240 5 5 5h4v-1.900H7c-1.710 0-3.100-1.390-3.100-3.100zM8 13h8v-2H8v2zm9-6h-4v1.900h4c1.710 0 3.100 1.390 3.100 3.100s-1.390 3.100-3.100 3.100h-4V17h4c2.760 0 5-2.240 5-5s-2.240-5-5-5z"/></svg>
<svg style="left:357.0px;top:258.7px" width="14" height="14" viewBox="0 0 24 24" fill="#5f6368"><circle cx="12" cy="12" r="3.200"/><path d="M9 2L7.170 4H4c-1.100 0-2 .9-2 2v12c0 1.100.9 2 2 2h16c1.100 0 2-.9 2-2V6c0-1.100-.9-2-2-2h-3.170L15 2H9zm3 15c-2.760 0-5-2.240-5-5s2.240-5 5-5 5 2.240 5 5-2.240 5-5 5z"/></svg>
<div class="t" style="left:496.200px;top:119.300px;font-size:10.800px;line-height:13px;color:#f00;transform:scaleX(.86);transform-origin:0 0">2</div>
<svg style="left:0;top:0" width="1024" height="560" viewBox="0 0 1024 560" fill="none" stroke="#f00" stroke-width="2.500"><rect x="175.500" y="104.850" width="169.500" height="31.300" rx=".5"/><rect x="348.600" y="110.500" width="157.200" height="28.600" rx=".5"/></svg>
<div class="abs" style="left:510px;top:116px;width:1.500px;height:1.800px;background:#55585c"></div>
<!--/MENUS-->
<!--SIDEBAR-->
<!-- opera logo -->
<svg style="left:7.600px;top:7.600px" width="16" height="16" viewBox="0 0 16 16"><ellipse cx="8" cy="8" rx="7.700" ry="7.800" fill="#e0202c"/><ellipse cx="8" cy="8" rx="3.100" ry="5.600" fill="#16191d"/></svg>
<!-- home (active) -->
<div class="abs" style="left:6px;top:69px;width:19px;height:19px;border-radius:2px;background:#36a3dc"></div>
<svg style="left:10px;top:72px" width="11" height="13" viewBox="0 0 11 13"><path d="M1 4.800L5.500 1L10 4.800V10.500A1.500 1.500 0 0 1 8.500 12H2.500A1.500 1.500 0 0 1 1 10.500Z" fill="none" stroke="#fff" stroke-width="1.300" stroke-linejoin="round"/></svg>
<!-- star -->
<svg style="left:8.500px;top:107px" width="14" height="13" viewBox="0 0 14 13"><path d="M7 1L8.750 4.700L12.800 5.200L9.850 8L10.600 12L7 10.050L3.400 12L4.150 8L1.200 5.200L5.250 4.700Z" fill="none" stroke="#d6d9dc" stroke-width="1.200" stroke-linejoin="round"/></svg>
<div class="abs osd" style="top:137px"></div>
<!-- messenger -->
<svg style="left:7.500px;top:154px" width="16" height="16" viewBox="0 0 16 16"><defs><linearGradient id="mg" x1="0" y1="1" x2="0.600" y2="0"><stop offset="0" stop-color="#2a7cff"/><stop offset=".55" stop-color="#a03cf0"/><stop offset="1" stop-color="#ff5c6c"/></linearGradient></defs><path d="M8 0.300C3.600 0.300 0.300 3.500 0.300 7.700C0.300 9.900 1.200 11.800 2.700 13.100V15.700L5.100 14.400C6 14.700 7 14.800 8 14.800C12.400 14.800 15.700 11.700 15.700 7.700C15.700 3.500 12.400 0.300 8 0.300Z" fill="url(#mg)"/><path d="M3.400 9.800L5.900 5.900L8.400 7.700L11 5.800L12.700 5.700L10.100 9.600L7.600 7.800L5 9.700Z" fill="#fff"/></svg>
<!-- whatsapp -->
<svg style="left:7.500px;top:189.500px" width="16" height="16" viewBox="0 0 16 16"><path d="M8 0.400A7.400 7.400 0 0 0 1.600 11.500L0.500 15.500L4.600 14.400A7.400 7.400 0 1 0 8 0.400Z" fill="#fff"/><path d="M8 1.500A6.300 6.300 0 0 0 2.700 11.300L2.100 13.900L4.800 13.200A6.300 6.300 0 1 0 8 1.500Z" fill="#2fb85a"/><path d="M5.700 4.300C5.400 4.300 4.700 4.900 4.700 5.900C4.700 7.600 6.900 10.500 9.800 11.100C10.700 11.300 11.500 10.600 11.600 10L11.600 9.500L9.900 8.700L9.200 9.500C8.100 9.100 7.100 8.100 6.700 7.100L7.300 6.400L6.600 4.500Z" fill="#fff"/></svg>
<!-- instagram -->
<svg style="left:7.500px;top:224.500px" width="16" height="16" viewBox="0 0 16 16"><defs><linearGradient id="ig" x1="0.100" y1="1" x2="0.900" y2="0"><stop offset="0" stop-color="#fdb13f"/><stop offset=".35" stop-color="#f0423e"/><stop offset=".7" stop-color="#c32aa3"/><stop offset="1" stop-color="#7a37c8"/></linearGradient></defs><rect x="0.300" y="0.300" width="15.400" height="15.400" rx="4" fill="url(#ig)"/><rect x="3.300" y="3.300" width="9.400" height="9.400" rx="2.800" fill="none" stroke="#fff" stroke-width="1.300"/><circle cx="8" cy="8" r="2.300" fill="none" stroke="#fff" stroke-width="1.300"/><circle cx="11" cy="5" r=".8" fill="#fff"/></svg>
<div class="abs osd" style="top:256px"></div>
<!-- player -->
<svg style="left:8px;top:272.800px" width="14.300" height="14.300" viewBox="0 0 14 14"><circle cx="7" cy="7" r="6.200" fill="none" stroke="#d6d9dc" stroke-width="1.200"/><path d="M5.300 4.300L9.800 7L5.300 9.700Z" fill="none" stroke="#d6d9dc" stroke-width="1.100" stroke-linejoin="round"/></svg>
<!-- send -->
<svg style="left:8px;top:308.500px" width="15" height="14" viewBox="0 0 15 14"><path d="M1 1L14 7L1 13L3.300 7Z" fill="none" stroke="#d6d9dc" stroke-width="1.200" stroke-linejoin="round"/></svg>
<div class="abs osd" style="top:339px"></div>
<!-- heart -->
<svg style="left:8.500px;top:357px" width="14" height="13" viewBox="0 0 14 13"><path d="M7 12C2.300 8.300 0.800 6.500 0.800 4.200A3.100 3.100 0 0 1 7 3.100A3.100 3.100 0 0 1 13.200 4.200C13.200 6.500 11.700 8.300 7 12Z" fill="none" stroke="#d6d9dc" stroke-width="1.200"/></svg>
<!-- clock -->
<svg style="left:8.300px;top:391.300px" width="14" height="14" viewBox="0 0 14 14"><circle cx="7" cy="7" r="6.200" fill="none" stroke="#d6d9dc" stroke-width="1.200"/><path d="M7 3.500V7.200L9.200 9" fill="none" stroke="#d6d9dc" stroke-width="1.200"/></svg>
<!-- gear -->
<svg style="left:8px;top:426px" width="15" height="15" viewBox="0 0 24 24"><path fill="none" stroke="#d6d9dc" stroke-width="1.900" stroke-linejoin="round" d="M10 2.500H14L14.600 5.400L16.600 6.500L19.400 5.600L21.400 9L19.200 11V13L21.400 15L19.400 18.400L16.600 17.500L14.600 18.600L14 21.500H10L9.400 18.600L7.400 17.500L4.600 18.400L2.600 15L4.800 13V11L2.600 9L4.600 5.600L7.400 6.500L9.400 5.400Z"/><circle cx="12" cy="12" r="3.200" fill="none" stroke="#d6d9dc" stroke-width="1.900"/></svg>
<div class="abs osd" style="top:458px"></div>
<!-- bulb -->
<svg style="left:9px;top:474px" width="13" height="17" viewBox="0 0 13 17"><path d="M6.500 1.200A4.700 4.700 0 0 0 3.700 9.700L4.900 13H8.100L9.300 9.700A4.700 4.700 0 0 0 6.500 1.200Z" fill="none" stroke="#d6d9dc" stroke-width="1.200" stroke-linejoin="round"/><path d="M5 14.200L6.500 16.200L8 14.200" fill="none" stroke="#d6d9dc" stroke-width="1.200"/></svg>
<!-- ===== right side panel icons ===== -->
<svg style="left:995.200px;top:120.600px" width="14.600" height="14.600" viewBox="0 0 14 14"><rect x="0" y="0" width="14" height="14" rx="2" fill="#4285f4"/><rect x="0" y="10.600" width="10.600" height="3.400" fill="#34a853"/><rect x="10.600" y="0" width="3.400" height="10.600" fill="#fbbc04"/><path d="M10.600 10.600H14L10.600 14Z" fill="#ea4335"/><path d="M0 10.600H3.400V14H2A2 2 0 0 1 0 12Z" fill="#188038"/><path d="M10.600 0H12A2 2 0 0 1 14 2V3.400H10.600Z" fill="#1967d2"/><rect x="3.200" y="3.200" width="7.400" height="7.400" fill="#fff"/><text x="6.900" y="9" font-family="Liberation Sans, sans-serif" font-size="5.400" font-weight="bold" fill="#4285f4" text-anchor="middle">31</text></svg>
<svg style="left:995.100px;top:164px" width="15.200" height="15.200" viewBox="0 0 15 15"><rect width="15" height="15" rx="1.500" fill="#fbbc04"/><path d="M7.500 3A3 3 0 0 0 5.800 8.400V9.600H9.200V8.400A3 3 0 0 0 7.500 3Z" fill="#fff"/><rect x="5.900" y="10.300" width="3.200" height="1.300" fill="#fff"/></svg>
<svg style="left:995px;top:208.300px" width="15" height="15" viewBox="0 0 15 15"><circle cx="7.500" cy="7.500" r="7.500" fill="#2f7de1"/><path d="M4.600 10.200L11.200 4.300" stroke="#fff" stroke-width="2.200" stroke-linecap="round"/><circle cx="3.600" cy="7.700" r="1.200" fill="#fbbc04"/></svg>
<div class="abs" style="left:995px;top:250px;width:16px;height:1px;background:#dadce0"></div>
<svg style="left:995px;top:278px" width="16" height="16" viewBox="0 0 16 16"><circle cx="8" cy="8" r="8" fill="#1a8be8"/><path d="M11.500 3L5.600 9.200L4.600 12.400L7.600 10.800Z" fill="none" stroke="#fff" stroke-width=".9" stroke-linejoin="round"/><path d="M11.300 3.300L4.800 12.200" stroke="#fff" stroke-width=".8"/></svg>
<svg style="left:998px;top:325px" width="10" height="10" viewBox="0 0 10 10"><path d="M5 0V10M0 5H10" stroke="#5f6368" stroke-width="1.200"/></svg>
<!--/SIDEBAR-->
</body>
</html>
